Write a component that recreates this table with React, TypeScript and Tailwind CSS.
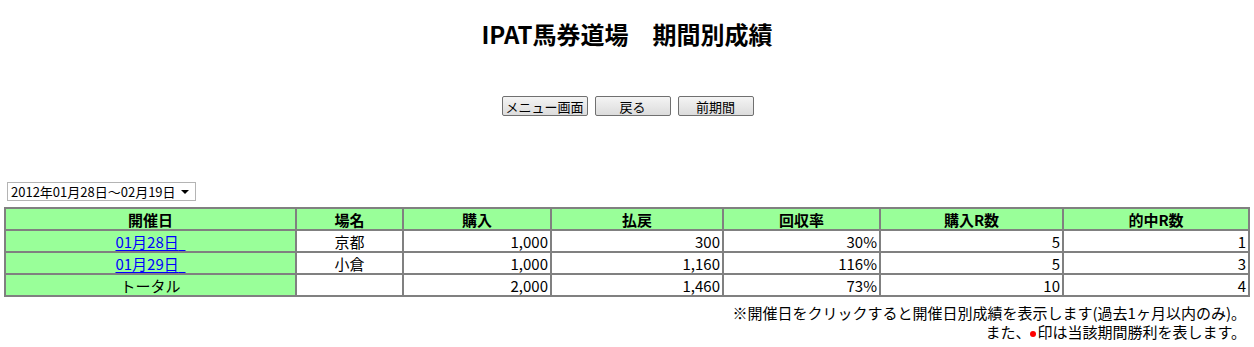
import React from 'react';

const font = "font-['MS_Gothic','Noto_Sans_CJK_JP',sans-serif]";

type Row = {
  date: string;
  link: boolean;
  place: string;
  buy: string;
  pay: string;
  rate: string;
  races: string;
  hits: string;
};

const rows: Row[] = [
  { date: '01月28日', link: true, place: '京都', buy: '1,000', pay: '300', rate: '30%', races: '5', hits: '1' },
  { date: '01月29日', link: true, place: '小倉', buy: '1,000', pay: '1,160', rate: '116%', races: '5', hits: '3' },
  { date: 'トータル', link: false, place: '', buy: '2,000', pay: '1,460', rate: '73%', races: '10', hits: '4' },
];

const headers = ['開催日', '場名', '購入', '払戻', '回収率', '購入R数', '的中R数'];
const widths = ['w-[291px]', 'w-[107px]', 'w-[148px]', 'w-[172px]', 'w-[157px]', 'w-[183px]', 'w-auto'];

function Btn({ label, w }: { label: string; w: string }) {
  return (
    <button
      className={`${w} h-[20px] border border-[#707070] rounded-[2px] bg-gradient-to-b from-[#f4f4f4] to-[#dcdcdc] text-[13px] leading-none text-black`}
    >
      {label}
    </button>
  );
}

export default function App() {
  const cell = 'border border-[#808080] h-[22px] px-[2px] text-[15px] leading-none';
  return (
    <div className={`w-[1254px] h-[347px] bg-white text-black ${font}`}>
      <h1 className="pt-[20px] text-center text-[24px] font-bold leading-[28px] font-['Noto_Sans_CJK_JP',sans-serif]">
        IPAT馬券道場　期間別成績
      </h1>

      <div className="mt-[48px] flex justify-center gap-[7px] pl-[1px]">
        <Btn label="メニュー画面" w="w-[86px]" />
        <Btn label="戻る" w="w-[76px]" />
        <Btn label="前期間" w="w-[76px]" />
      </div>

      <div className="mt-[66px] pl-[7px]">
        <div className="w-[189px] h-[19px] border border-[#b4b4b4] flex items-center justify-between pl-[3px] pr-[6px] text-[13px] leading-none">
          <span>2012年01月28日〜02月19日</span>
          <svg width="8" height="4" viewBox="0 0 8 4">
            <path d="M0 0h8L4 4z" fill="#000" />
          </svg>
        </div>
      </div>

      <table className="mt-[6px] ml-[4px] w-[1246px] border border-[#808080] border-separate border-spacing-0 table-fixed">
        <thead>
          <tr>
            {headers.map((h, i) => (
              <th key={h} className={`${cell} ${widths[i]} h-[20px] bg-[#99ff99] font-bold text-[15px] text-center`}>
                {h}
              </th>
            ))}
          </tr>
        </thead>
        <tbody>
          {rows.map((r) => (
            <tr key={r.date}>
              <td className={`${cell} bg-[#99ff99] text-center`}>
                {r.link ? (
                  <a href="#" className="text-[#0000ff] underline underline-offset-[2px]">
                    {r.date}&nbsp;&nbsp;
                  </a>
                ) : (
                  r.date
                )}
              </td>
              <td className={`${cell} text-center`}>{r.place}</td>
              <td className={`${cell} text-right`}>{r.buy}</td>
              <td className={`${cell} text-right`}>{r.pay}</td>
              <td className={`${cell} text-right`}>{r.rate}</td>
              <td className={`${cell} text-right`}>{r.races}</td>
              <td className={`${cell} text-right`}>{r.hits}</td>
            </tr>
          ))}
        </tbody>
      </table>

      <div className="pr-[8px] pt-[6px] text-right text-[15px] leading-[19px]">
        <p>※開催日をクリックすると開催日別成績を表示します(過去1ヶ月以内のみ)。</p>
        <p>
          また、<span className="inline-block w-[6px] h-[6px] rounded-full bg-[#ff0000] mr-[1px] align-[1px]"></span>印は当該期間勝利を表します。
        </p>
      </div>
    </div>
  );
}
